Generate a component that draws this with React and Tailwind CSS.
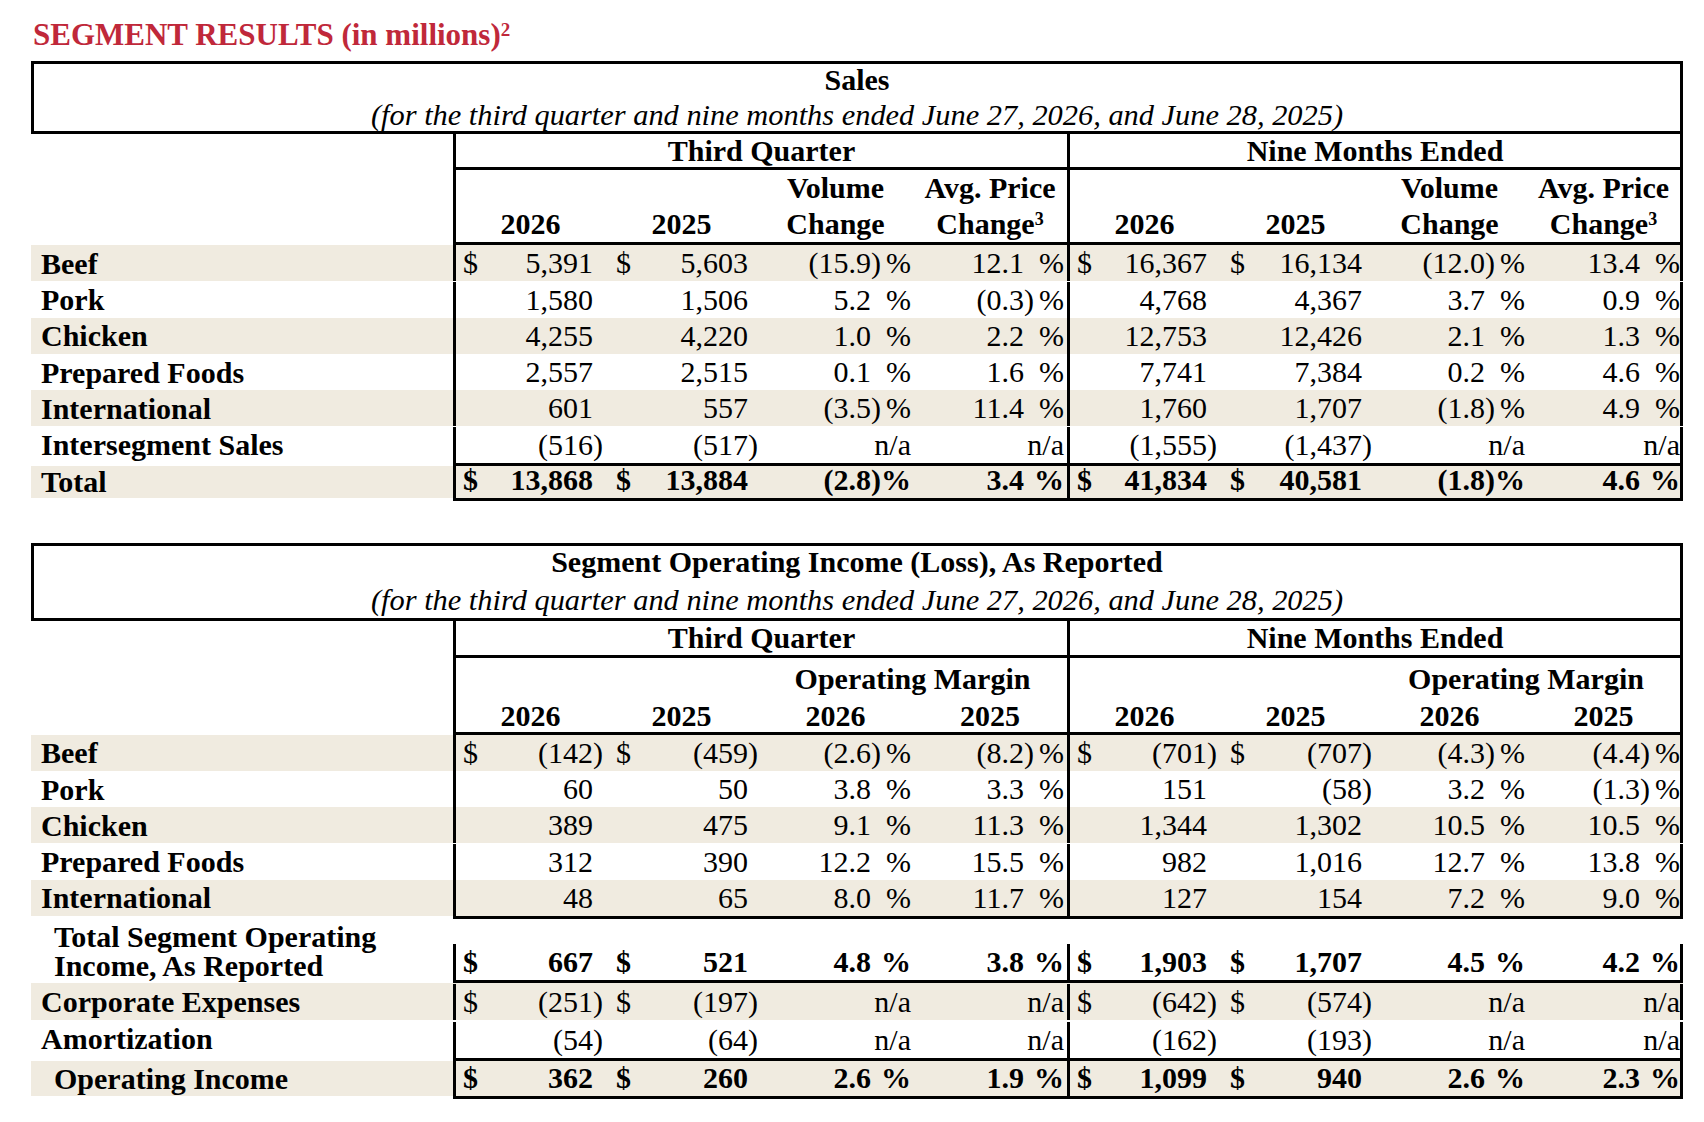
import React from "react";

const salesRows = [
  { label: "Beef", d: true, bg: true, q: ["5,391", "5,603", "(15.9)", "12.1"], n: ["16,367", "16,134", "(12.0)", "13.4"] },
  { label: "Pork", q: ["1,580", "1,506", "5.2", "(0.3)"], n: ["4,768", "4,367", "3.7", "0.9"] },
  { label: "Chicken", bg: true, q: ["4,255", "4,220", "1.0", "2.2"], n: ["12,753", "12,426", "2.1", "1.3"] },
  { label: "Prepared Foods", q: ["2,557", "2,515", "0.1", "1.6"], n: ["7,741", "7,384", "0.2", "4.6"] },
  { label: "International", bg: true, q: ["601", "557", "(3.5)", "11.4"], n: ["1,760", "1,707", "(1.8)", "4.9"] },
  { label: "Intersegment Sales", q: ["(516)", "(517)", "n/a", "n/a"], n: ["(1,555)", "(1,437)", "n/a", "n/a"] },
];

const incomeRows = [
  { label: "Beef", d: true, bg: true, q: ["(142)", "(459)", "(2.6)", "(8.2)"], n: ["(701)", "(707)", "(4.3)", "(4.4)"] },
  { label: "Pork", q: ["60", "50", "3.8", "3.3"], n: ["151", "(58)", "3.2", "(1.3)"] },
  { label: "Chicken", bg: true, q: ["389", "475", "9.1", "11.3"], n: ["1,344", "1,302", "10.5", "10.5"] },
  { label: "Prepared Foods", q: ["312", "390", "12.2", "15.5"], n: ["982", "1,016", "12.7", "13.8"] },
  { label: "International", bg: true, q: ["48", "65", "8.0", "11.7"], n: ["127", "154", "7.2", "9.0"] },
];

// number with a slot for the closing paren, accounting style
function Amount({ v }) {
  const neg = v.startsWith("(");
  return (
    <div className="flex justify-end">
      <span>{neg ? v.slice(0, -1) : v}</span>
      <span className="w-[10px] shrink-0">{neg ? ")" : ""}</span>
    </div>
  );
}

function Pct({ v, bold }) {
  if (v === "n/a") return <div className="text-right">n/a</div>;
  const neg = v.startsWith("(");
  return (
    <div className="flex justify-end">
      <span>{neg ? v.slice(0, -1) : v}</span>
      <span className="w-[10px] shrink-0">{neg ? ")" : ""}</span>
      <span className={bold ? "" : "ml-[5px]"}>%</span>
    </div>
  );
}

function Section({ vals, dollar, bold, last }) {
  return (
    <div
      className={`flex shrink-0 border-l-[3px] border-black whitespace-nowrap ${
        last ? "w-[616px] border-r-[3px]" : "w-[614px]"
      }`}
    >
      <div className="w-[27px] shrink-0 pl-[7px]">{dollar ? "$" : ""}</div>
      <div className="w-[122px] shrink-0 pr-[2px]">
        <Amount v={vals[0]} />
      </div>
      <div className="w-[23px] shrink-0 pl-[11px]">{dollar ? "$" : ""}</div>
      <div className="w-[130px] shrink-0">
        <Amount v={vals[1]} />
      </div>
      <div className="w-[155px] shrink-0 pr-[2px]">
        <Pct v={vals[2]} bold={bold} />
      </div>
      <div className={`shrink-0 ${last ? "w-[153px]" : "w-[154px] pr-[3px]"}`}>
        <Pct v={vals[3]} bold={bold} />
      </div>
    </div>
  );
}

function Row({ label, q, n, d, bg, bold, h, indent, tall }) {
  return (
    <div className={`flex ${h} ${tall ? "items-end" : "items-center"} ${bg ? "bg-[#f0ebe0]" : ""} ${bold ? "font-bold" : ""}`}>
      <div className={`w-[422px] shrink-0 self-stretch flex ${tall ? "items-end leading-[29px]" : "items-center"} font-bold ${indent ? "pl-[23px]" : "pl-[10px]"}`}>
        <div>{label}</div>
      </div>
      <div className="flex self-stretch items-end leading-[36px]">
        <Section vals={q} dollar={d} bold={bold} />
        <Section vals={n} dollar={d} bold={bold} last />
      </div>
    </div>
  );
}

function HLine() {
  return (
    <div className="flex h-[3px]">
      <div className="w-[422px] shrink-0" />
      <div className="w-[1230px] bg-black" />
    </div>
  );
}

function TitleBox({ title, h, lead, gap }) {
  return (
    <div className={`border-[3px] border-black text-center ${h}`}>
      <div className={`font-bold ${lead}`}>{title}</div>
      <div className={`italic text-[30.4px] leading-[36px] ${gap}`}>
        (for the third quarter and nine months ended June 27, 2026, and June 28, 2025)
      </div>
    </div>
  );
}

function PeriodRow({ h }) {
  return (
    <div className={`flex font-bold ${h}`}>
      <div className="w-[422px] shrink-0" />
      <div className="w-[614px] shrink-0 border-l-[3px] border-black text-center">Third Quarter</div>
      <div className="w-[616px] shrink-0 border-x-[3px] border-black text-center">Nine Months Ended</div>
    </div>
  );
}

function SalesHead({ last }) {
  return (
    <div className={`flex shrink-0 border-l-[3px] border-black ${last ? "w-[616px] border-r-[3px]" : "w-[614px]"}`}>
      <div className="w-[149px] shrink-0 flex items-end justify-center">2026</div>
      <div className="w-[153px] shrink-0 flex items-end justify-center">2025</div>
      <div className="w-[155px] shrink-0 text-center">
        Volume
        <br />
        Change
      </div>
      <div className={`${last ? "w-[153px]" : "w-[154px]"} shrink-0 text-center`}>
        Avg. Price
        <br />
        Change<sup className="text-[18px]">3</sup>
      </div>
    </div>
  );
}

function IncomeHead({ last }) {
  return (
    <div className={`flex shrink-0 border-l-[3px] border-black ${last ? "w-[616px] border-r-[3px]" : "w-[614px]"}`}>
      <div className="w-[149px] shrink-0 flex items-end justify-center leading-[32px]">2026</div>
      <div className="w-[153px] shrink-0 flex items-end justify-center leading-[32px]">2025</div>
      <div className={`${last ? "w-[308px]" : "w-[309px]"} shrink-0 flex flex-col justify-between pt-[2px]`}>
        <div className="text-center leading-[38px]">Operating Margin</div>
        <div className="flex leading-[32px]">
          <div className="w-[155px] shrink-0 text-center">2026</div>
          <div className="flex-1 text-center">2025</div>
        </div>
      </div>
    </div>
  );
}

export default function App() {
  return (
    <div className="min-h-screen bg-white text-black font-['Liberation_Serif','Times_New_Roman',serif] text-[30px] pl-[31px] pt-[16px]">
      <h1 className="pl-[2px] text-[31px] font-bold leading-[38px] text-[#c0283a]">
        SEGMENT RESULTS (in millions)<sup className="text-[19px]">2</sup>
      </h1>

      {/* Sales */}
      <div className="mt-[7px] w-[1652px]">
        <TitleBox title="Sales" h="h-[73px]" lead="leading-[31px]" gap="mt-[2px]" />
        <PeriodRow h="h-[33px] leading-[33px]" />
        <HLine />
        <div className="flex h-[72px] font-bold leading-[36px]">
          <div className="w-[422px] shrink-0" />
          <SalesHead />
          <SalesHead last />
        </div>
        <HLine />
        {salesRows.map((r) => (
          <Row key={r.label} {...r} h="h-[36.3px]" />
        ))}
        <HLine />
        <Row
          label="Total"
          d
          bg
          bold
          h="h-[32px]"
          q={["13,868", "13,884", "(2.8)", "3.4"]}
          n={["41,834", "40,581", "(1.8)", "4.6"]}
        />
        <HLine />
      </div>

      {/* Segment operating income */}
      <div className="mt-[42px] w-[1652px]">
        <TitleBox
          title="Segment Operating Income (Loss), As Reported"
          h="h-[78px]"
          lead="leading-[32px]"
          gap="mt-[4px]"
        />
        <PeriodRow h="h-[34px] leading-[34px]" />
        <HLine />
        <div className="flex h-[74px] font-bold">
          <div className="w-[422px] shrink-0" />
          <IncomeHead />
          <IncomeHead last />
        </div>
        <HLine />
        {incomeRows.map((r) => (
          <Row key={r.label} {...r} h="h-[36.2px]" />
        ))}
        <HLine />
        <Row
          label={
            <>
              Total Segment Operating
              <br />
              Income, As Reported
            </>
          }
          d
          bold
          indent
          tall
          h="h-[61px]"
          q={["667", "521", "4.8", "3.8"]}
          n={["1,903", "1,707", "4.5", "4.2"]}
        />
        <HLine />
        <Row
          label="Corporate Expenses"
          d
          bg
          h="h-[37px]"
          q={["(251)", "(197)", "n/a", "n/a"]}
          n={["(642)", "(574)", "n/a", "n/a"]}
        />
        <Row label="Amortization" h="h-[38px]" q={["(54)", "(64)", "n/a", "n/a"]} n={["(162)", "(193)", "n/a", "n/a"]} />
        <HLine />
        <Row
          label="Operating Income"
          d
          bg
          bold
          indent
          h="h-[35px]"
          q={["362", "260", "2.6", "1.9"]}
          n={["1,099", "940", "2.6", "2.3"]}
        />
        <HLine />
      </div>
    </div>
  );
}
